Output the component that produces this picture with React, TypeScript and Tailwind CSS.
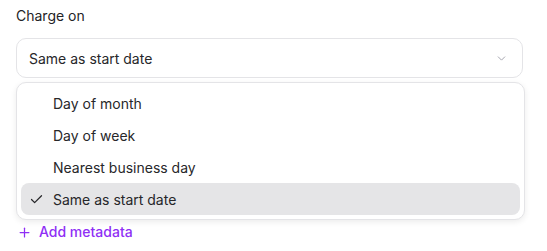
import { Check, ChevronDown, Plus } from "lucide-react";

const options = ["Day of month", "Day of week", "Nearest business day", "Same as start date"];

export default function App() {
  const selected = "Same as start date";

  return (
    <div className="h-[251px] w-[547px] bg-white pl-4 pr-6 pt-[6px] font-['Inter',sans-serif] text-[14px] text-[#27272a]">
      <p className="leading-5 text-[#232326]">Charge on</p>

      <button className="mt-3 flex h-10 w-full items-center justify-between rounded-[10px] border border-[#e4e4e7] bg-white pl-3 pr-[14px] text-left text-[#27272a]">
        <span>{selected}</span>
        <ChevronDown className="h-[13px] w-[13px] text-[#a1a1aa]" strokeWidth={1.75} />
      </button>

      <ul className="mt-1 w-[509px] rounded-[10px] border border-[#e4e4e7] bg-white p-1 shadow-[0_2px_6px_rgba(0,0,0,0.08)]">
        {options.map((option) => {
          const active = option === selected;
          return (
            <li
              key={option}
              className={`flex h-8 items-center rounded-lg pl-2 ${active ? "bg-[#e5e5e7]" : ""}`}
            >
              <span className="flex w-6 items-center">
                {active ? <Check className="h-[15px] w-[15px] text-[#27272a]" strokeWidth={2} /> : null}
              </span>
              <span>{option}</span>
            </li>
          );
        })}
      </ul>

      <button className="mt-[2px] flex items-center gap-[7px] pl-[1px] leading-5 font-medium text-[#8f2ff5]">
        <Plus className="h-[15px] w-[15px]" strokeWidth={2} />
        Add metadata
      </button>
    </div>
  );
}
